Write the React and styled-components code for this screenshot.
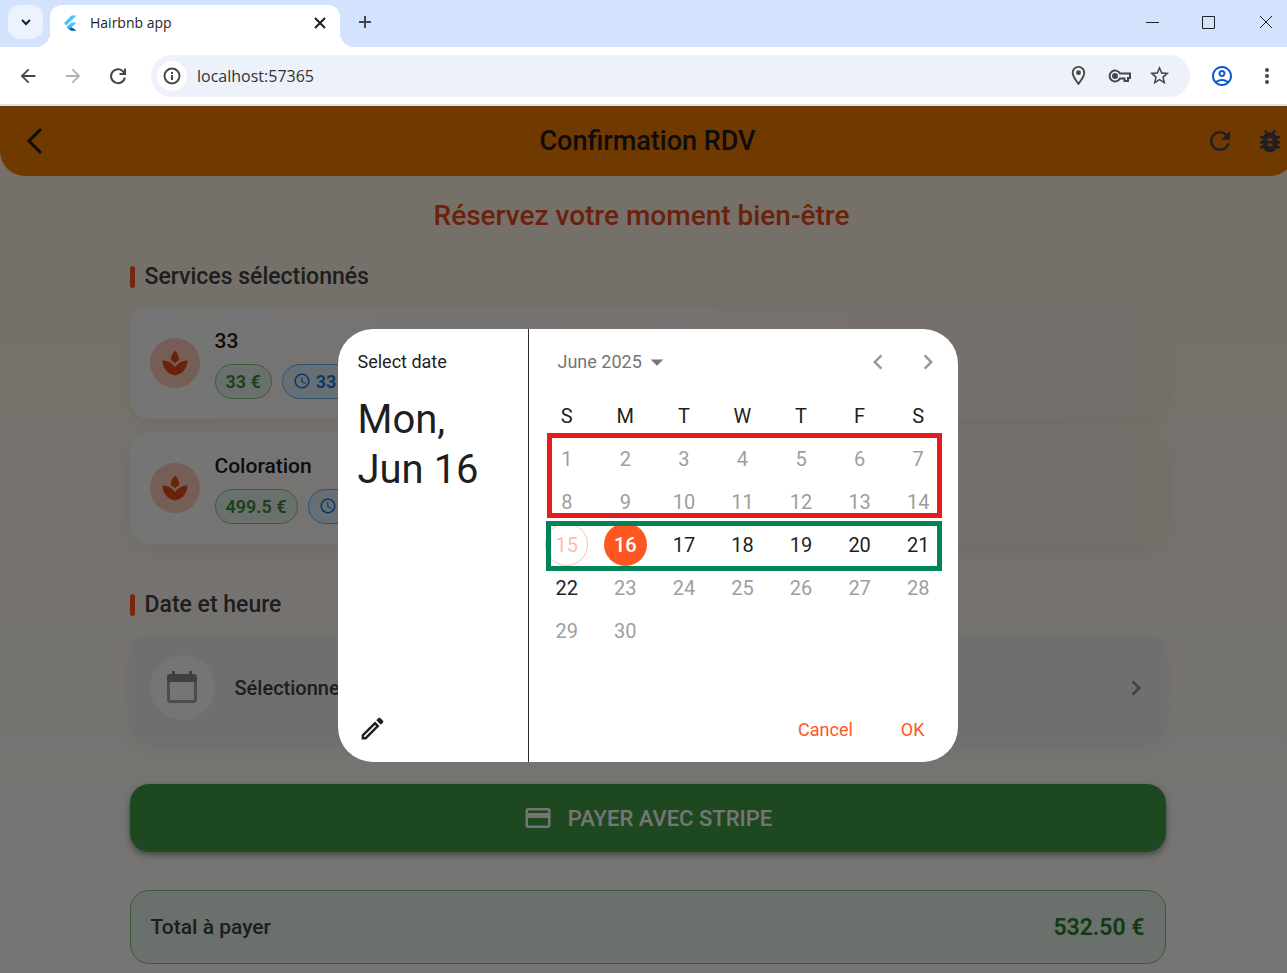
import React from 'react';
import styled, { createGlobalStyle } from 'styled-components';
import {
    MdArrowBack,
    MdArrowForward,
    MdArrowDropDown,
    MdRefresh,
    MdBugReport,
    MdSpa,
    MdAccessTime,
    MdChevronLeft,
    MdChevronRight,
    MdCreditCard,
    MdMoreVert,
    MdOutlineAccountCircle,
    MdOutlineEdit,
    MdOutlineLocationOn,
    MdStarOutline,
} from 'react-icons/md';

const GlobalStyle = createGlobalStyle`
    * {
        box-sizing: border-box;
    }

    body {
        margin: 0;
        overflow: hidden;
    }

    button, input {
        font: inherit;
        color: inherit;
        border: none;
        padding: 0;
        margin: 0;
        background: none;
    }

    h1, h2, h3, p, ul {
        margin: 0;
        padding: 0;
        font-weight: inherit;
    }

    svg {
        display: block;
        flex: none;
    }
`;

/* ---------- browser window ---------- */

const Window = styled.div`
    height: 100vh;
    display: flex;
    flex-direction: column;
    overflow: hidden;
    background: #fff;
    font-family: 'Open Sans', 'Noto Sans', sans-serif;
`;

const TabStrip = styled.div`
    display: flex;
    height: 47px;
    padding: 5px 0 0 8px;
    background: #d3e3fd;
    color: #1f1f1f;
`;

const TabSearch = styled.button`
    display: grid;
    place-items: center;
    width: 35px;
    height: 34px;
    margin-right: 7px;
    border-radius: 12px;
    background: #ecf3fe;
`;

const Tab = styled.div`
    position: relative;
    display: flex;
    align-items: center;
    width: 290px;
    padding: 0 12px 7px 12px;
    border-radius: 12px 12px 0 0;
    background: #fff;
    font-size: 14px;

    &::before, &::after {
        content: '';
        position: absolute;
        bottom: 0;
        width: 14px;
        height: 14px;
    }

    &::before {
        right: 100%;
        background: radial-gradient(circle at 0 0, transparent 14px, #fff 14px);
    }

    &::after {
        left: 100%;
        background: radial-gradient(circle at 100% 0, transparent 14px, #fff 14px);
    }
`;

const TabTitle = styled.span`
    flex: 1;
    margin-left: 12px;
`;

const StripButton = styled.button`
    display: grid;
    place-items: center;
    width: ${(props) => props.$width || 16}px;
    height: 34px;
`;

const WindowButtons = styled.div`
    display: flex;
    margin-left: auto;
    margin-right: -8px;
`;

const Toolbar = styled.div`
    display: flex;
    align-items: center;
    height: 59px;
    padding: 0 8px 0 16px;
    border-bottom: 2px solid #dfe3e1;
    background: #fff;
    color: #474747;
`;

const ToolButton = styled.button`
    display: grid;
    place-items: center;
    width: 24px;
    height: 34px;
    margin-right: 21px;
    color: ${(props) => props.$color || 'inherit'};
`;

const Omnibox = styled.label`
    display: flex;
    flex: 1;
    align-items: center;
    gap: 17px;
    height: 42px;
    margin-right: 20px;
    padding: 0 19px 0 6px;
    border-radius: 21px;
    background: #ecf1fa;
`;

const SiteInfo = styled.span`
    display: grid;
    place-items: center;
    width: 30px;
    height: 30px;
    border-radius: 50%;
    background: #fff;
`;

const UrlInput = styled.input`
    flex: 1;
    min-width: 0;
    margin-left: -7px;
    font-size: 16px;
    color: #333;
    outline: none;
`;

/* ---------- app ---------- */

/* The page surface runs slightly past the window's right and bottom edges. */
const Stage = styled.main`
    position: relative;
    flex: 1;
    min-height: 0;
    margin: 0 -8px -12px 0;
    overflow: hidden;
    background: linear-gradient(#fff3e0, #ffffff);
    font-family: Roboto, sans-serif;
`;

const AppBar = styled.header`
    display: grid;
    grid-template-columns: 1fr auto 1fr;
    align-items: center;
    height: 70px;
    border-radius: 0 0 25px 25px;
    background: #f57c00;
`;

const AppTitle = styled.h1`
    font-size: 27px;
    font-weight: 500;
    color: #1d1b20;
`;

const AppActions = styled.div`
    display: flex;
    justify-content: flex-end;
    color: #49454f;
`;

const AppBarButton = styled.button`
    display: grid;
    place-items: center;
    width: ${(props) => (props.$leading ? 70 : 50)}px;
    height: 50px;
`;

const Content = styled.div`
    padding: 23px 10%;
`;

const Headline = styled.h2`
    margin-bottom: 31px;
    padding-right: 12px;
    font-size: 28px;
    line-height: 34px;
    font-weight: 500;
    text-align: center;
    color: #e64a19;
`;

const SectionTitle = styled.h3`
    display: flex;
    align-items: center;
    gap: 10px;
    margin-bottom: 17px;
    font-size: 23px;
    line-height: 26px;
    font-weight: 500;
    color: #424242;

    &::before {
        content: '';
        width: 5px;
        height: 22px;
        border-radius: 3px;
        background: #ff5722;
    }
`;

const ServiceList = styled.ul`
    display: flex;
    flex-direction: column;
    gap: 13px;
    margin-bottom: 48px;
    list-style: none;
`;

const ServiceCard = styled.li`
    display: flex;
    align-items: center;
    gap: 15px;
    height: 112px;
    padding: 0 20px;
    border-radius: 20px;
    background: linear-gradient(96deg, #ffffff, #fff1e8);
    box-shadow: 0 5px 15px rgba(0, 0, 0, 0.06);
`;

const ServiceIcon = styled.span`
    display: grid;
    place-items: center;
    width: 50px;
    height: 50px;
    border-radius: 50%;
    background: #ffccbc;
    color: #e64a19;
`;

const ServiceName = styled.p`
    margin-bottom: 10px;
    font-size: 21px;
    line-height: 26px;
    font-weight: 500;
    color: #1d1b20;
`;

const Chips = styled.div`
    display: flex;
    gap: 10px;
`;

const Chip = styled.span`
    display: flex;
    align-items: center;
    gap: 5px;
    height: 35px;
    padding: 0 10px;
    border: 1px solid ${(props) => (props.$blue ? '#64b5f6' : '#81c784')};
    border-radius: 18px;
    background: ${(props) => (props.$blue ? '#e3f2fd' : '#e8f5e9')};
    font-size: 18px;
    font-weight: 600;
    color: ${(props) => (props.$blue ? '#1976d2' : '#388e3c')};
`;

const DateCard = styled.button`
    display: flex;
    align-items: center;
    gap: 20px;
    width: 100%;
    height: 105px;
    margin-bottom: 44px;
    padding: 0 15px 0 20px;
    border-radius: 20px;
    background: #f1f1f1;
    box-shadow: 0 5px 15px rgba(0, 0, 0, 0.06);
    font-size: 20px;
    font-weight: 500;
    color: #424242;
    text-align: left;
`;

const DateIcon = styled.span`
    display: grid;
    place-items: center;
    width: 65px;
    height: 65px;
    border-radius: 50%;
    background: #fff;
`;

const DateLabel = styled.span`
    flex: 1;
`;

const PayButton = styled.button`
    display: flex;
    align-items: center;
    justify-content: center;
    gap: 15px;
    width: 100%;
    height: 68px;
    margin-bottom: 38px;
    border-radius: 19px;
    background: #43a047;
    box-shadow: 0 3px 6px rgba(0, 0, 0, 0.4);
    font-size: 22px;
    font-weight: 500;
    color: #fff;
`;

const TotalCard = styled.div`
    display: flex;
    align-items: center;
    justify-content: space-between;
    height: 74px;
    padding: 0 20px;
    border: 1px solid #81c784;
    border-radius: 19px;
    background: #e8f5e9;
    font-size: 21px;
    font-weight: 500;
    color: #424242;
`;

const TotalAmount = styled.strong`
    font-size: 23px;
    font-weight: 600;
    color: #2e7d32;
`;

/* ---------- date picker ---------- */

const Scrim = styled.div`
    position: absolute;
    inset: 0;
    display: grid;
    place-items: center;
    background: rgba(0, 0, 0, 0.54);
`;

const Dialog = styled.section`
    display: flex;
    width: 620px;
    min-height: 433px;
    border-radius: 35px;
    background: #fff;
    color: #1f1f1f;
    font-size: 18px;
`;

const Summary = styled.div`
    display: flex;
    flex-direction: column;
    align-items: flex-start;
    width: 191px;
    padding: 21px 20px 19px;
    border-right: 1px solid #303030;
`;

const SummaryLabel = styled.p`
    line-height: 24px;
    margin-bottom: 21px;
`;

const SummaryDate = styled.p`
    font-size: 40px;
    line-height: 50px;
`;

const EditButton = styled.button`
    margin-top: auto;
`;

const Picker = styled.div`
    display: flex;
    flex: 1;
    flex-direction: column;
    padding: 0 10px 0 9px;
`;

const MonthBar = styled.div`
    display: flex;
    align-items: center;
    height: 65px;
    padding: 0 5px 0 20px;
    color: #999;
`;

const MonthButton = styled.button`
    display: flex;
    align-items: center;
    margin-right: auto;
    color: #757575;
`;

const ArrowButton = styled.button`
    display: grid;
    place-items: center;
    width: 30px;
    height: 50px;
    margin-left: 20px;
`;

const Calendar = styled.div`
    display: grid;
    grid-template-columns: repeat(7, 1fr);
    grid-auto-rows: 43px;
    place-items: center;
    font-size: 20px;
`;

const Weekday = styled.span`
    grid-row: 1;
`;

const dayColors = {
    past: '#9e9e9e',
    open: '#1f1f1f',
    today: '#ffbda9',
    selected: '#fff',
};

const Day = styled.button`
    grid-row: ${(props) => props.$week + 2};
    grid-column: ${(props) => props.$column + 1};
    width: 43px;
    height: 43px;
    border-radius: 50%;
    border: ${(props) => (props.$kind === 'today' ? '1px solid #ffbda9' : 'none')};
    background: ${(props) => (props.$kind === 'selected' ? '#ff5722' : 'none')};
    font-weight: ${(props) => (props.$kind === 'selected' ? 500 : 400)};
    color: ${(props) => dayColors[props.$kind]};
`;

const Frame = styled.div`
    grid-column: 1 / -1;
    grid-row: ${(props) => props.$rows};
    place-self: stretch;
    margin: ${(props) => props.$margin};
    border: 5px solid ${(props) => props.$color};
    pointer-events: none;
    z-index: 1;
`;

const DialogActions = styled.div`
    display: flex;
    justify-content: flex-end;
    gap: 48px;
    height: 65px;
    margin-top: auto;
    padding-right: 23px;
    color: #ff5722;
`;

/* ---------- drawings ---------- */

const FlutterLogo = () => (
    <svg width="16" height="16" viewBox="0 0 16 16">
        <path d="M9.5 0.5h5L4.5 10.5 2 8z" fill="#47c5fb" />
        <path d="M9.5 7.5h5L9.7 12.2 7 9.8z" fill="#47c5fb" />
        <path d="M4.6 12.3 7.1 9.8l2.6 2.4L7.1 14.7z" fill="#3aaee8" />
        <path d="M9.7 12.2l4.8 3.5h-5l-2.4-1z" fill="#00569e" />
    </svg>
);

const Stroke = ({ size = 16, width = 2, d, children, ...rest }) => (
    <svg
        width={size}
        height={size}
        viewBox={`0 0 ${size} ${size}`}
        fill="none"
        stroke="currentColor"
        strokeWidth={width}
        {...rest}
    >
        <path d={d} />
        {children}
    </svg>
);

const CalendarIcon = () => (
    <svg width="38" height="38" viewBox="0 0 38 38">
        <rect x="5.5" y="8" width="27" height="24.5" rx="2" fill="none" stroke="#a8a8a8" strokeWidth="3" />
        <path d="M4 13V8q0-3 3-3h2V2h3v3h14V2h3v3h2q3 0 3 3v5z" fill="#8c8c8c" />
    </svg>
);

const KeyIcon = () => (
    <Stroke size={24} width={2} d="M13 9.5a5.5 5.5 0 1 0 0 5h4.500v2.500h3.500v-3h2v-4.500z">
        <circle cx="8" cy="12" r="2" fill="currentColor" />
    </Stroke>
);

/* ---------- page ---------- */

const services = [
    { name: '33', price: '33 €', duration: '33 min' },
    { name: 'Coloration', price: '499.5 €', duration: '45 min' },
];

const weekdays = ['S', 'M', 'T', 'W', 'T', 'F', 'S'];

const dayKind = (day) => {
    if (day === 15) return 'today';
    if (day === 16) return 'selected';
    return day > 16 && day < 23 ? 'open' : 'past';
};

const Browser = () => (
    <>
        <TabStrip>
            <TabSearch aria-label="Search tabs">
                <Stroke width={2} d="M4 6l4 4 4-4" />
            </TabSearch>
            <Tab>
                <FlutterLogo />
                <TabTitle>Hairbnb app</TabTitle>
                <StripButton aria-label="Close tab">
                    <Stroke d="M3 3l10 10M13 3L3 13" />
                </StripButton>
            </Tab>
            <StripButton $width={50} aria-label="New tab">
                <Stroke d="M8 2v12M2 8h12" color="#474747" />
            </StripButton>
            <WindowButtons>
                <StripButton $width={56} aria-label="Minimize">
                    <Stroke width={1} d="M1 8.500h13" />
                </StripButton>
                <StripButton $width={56} aria-label="Maximize">
                    <Stroke width={1} d="M1.500 2.500h12v12h-12z" />
                </StripButton>
                <StripButton $width={58} aria-label="Close">
                    <Stroke width={1} d="M2 2l12 12M14 2L2 14" />
                </StripButton>
            </WindowButtons>
        </TabStrip>
        <Toolbar>
            <ToolButton aria-label="Back"><MdArrowBack size={22} /></ToolButton>
            <ToolButton aria-label="Forward" $color="#b0b0b0"><MdArrowForward size={22} /></ToolButton>
            <ToolButton aria-label="Reload">
                <Stroke size={22} d="M17.5 8.5a7 7 0 1 0 .4 4M18 3.5v5.5h-5.5" />
            </ToolButton>
            <Omnibox>
                <SiteInfo>
                    <Stroke size={18} width={2} d="M9 8v5M9 5v2">
                        <circle cx="9" cy="9" r="7.5" />
                    </Stroke>
                </SiteInfo>
                <UrlInput aria-label="Address" defaultValue="localhost:57365" />
                <MdOutlineLocationOn size={23} />
                <KeyIcon />
                <MdStarOutline size={23} />
            </Omnibox>
            <ToolButton aria-label="Profile" $color="#0b57d0"><MdOutlineAccountCircle size={24} /></ToolButton>
            <MdMoreVert size={24} />
        </Toolbar>
    </>
);

const DatePicker = () => (
    <Dialog role="dialog" aria-label="Select date">
        <Summary>
            <SummaryLabel>Select date</SummaryLabel>
            <SummaryDate>Mon,<br />Jun 16</SummaryDate>
            <EditButton aria-label="Edit date"><MdOutlineEdit size={29} /></EditButton>
        </Summary>
        <Picker>
            <MonthBar>
                <MonthButton>June 2025 <MdArrowDropDown size={30} /></MonthButton>
                <ArrowButton aria-label="Previous month"><MdChevronLeft size={30} /></ArrowButton>
                <ArrowButton aria-label="Next month"><MdChevronRight size={30} /></ArrowButton>
            </MonthBar>
            <Calendar>
                {weekdays.map((name, i) => <Weekday key={i}>{name}</Weekday>)}
                {Array.from({ length: 30 }, (_, i) => (
                    <Day key={i} $week={Math.floor(i / 7)} $column={i % 7} $kind={dayKind(i + 1)}>
                        {i + 1}
                    </Day>
                ))}
                <Frame $rows="2 / 4" $color="#e71d1d" $margin="-4px 6px 5px 9px" />
                <Frame $rows="4" $color="#008456" $margin="-2px 6px -5px 8px" />
            </Calendar>
            <DialogActions>
                <button>Cancel</button>
                <button>OK</button>
            </DialogActions>
        </Picker>
    </Dialog>
);

const App = () => {
    return (
        <Window>
            <GlobalStyle />
            <Browser />
            <Stage>
                <AppBar>
                    <AppBarButton $leading aria-label="Retour">
                        <Stroke size={30} width={3} d="M20 4L9 15l11 11" color="#1d1b20" strokeLinecap="round" />
                    </AppBarButton>
                    <AppTitle>Confirmation RDV</AppTitle>
                    <AppActions>
                        <AppBarButton aria-label="Actualiser"><MdRefresh size={30} /></AppBarButton>
                        <AppBarButton aria-label="Debug"><MdBugReport size={30} /></AppBarButton>
                    </AppActions>
                </AppBar>
                <Content>
                    <Headline>Réservez votre moment bien-être</Headline>
                    <SectionTitle>Services sélectionnés</SectionTitle>
                    <ServiceList>
                        {services.map((service) => (
                            <ServiceCard key={service.name}>
                                <ServiceIcon><MdSpa size={30} /></ServiceIcon>
                                <div>
                                    <ServiceName>{service.name}</ServiceName>
                                    <Chips>
                                        <Chip>{service.price}</Chip>
                                        <Chip $blue><MdAccessTime size={18} />{service.duration}</Chip>
                                    </Chips>
                                </div>
                            </ServiceCard>
                        ))}
                    </ServiceList>
                    <SectionTitle>Date et heure</SectionTitle>
                    <DateCard>
                        <DateIcon><CalendarIcon /></DateIcon>
                        <DateLabel>Sélectionner une date</DateLabel>
                        <MdChevronRight size={30} color="#8c8c8c" />
                    </DateCard>
                    <PayButton><MdCreditCard size={30} />PAYER AVEC STRIPE</PayButton>
                    <TotalCard>
                        <span>Total à payer</span>
                        <TotalAmount>532.50 €</TotalAmount>
                    </TotalCard>
                </Content>
                <Scrim>
                    <DatePicker />
                </Scrim>
            </Stage>
        </Window>
    );
};

export default App;
